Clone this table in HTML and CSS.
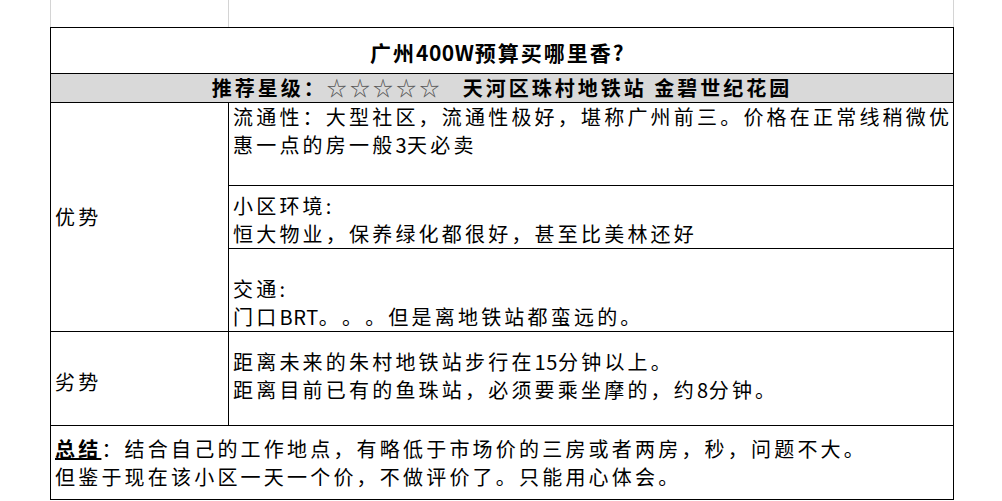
FILE: index.html
```html
<!DOCTYPE html>
<html lang="zh-CN">
<head>
<meta charset="utf-8">
<title>广州400W预算买哪里香?</title>
<link rel="stylesheet" href="styles.css">
</head>
<body>
<div class="sheet">
  <div class="strip">
    <div class="gcell"></div>
    <div class="gcell last"></div>
  </div>
  <div class="table">
    <div class="cell title span2"><span>广州<span class="lat">400W</span>预算买哪里香<span class="lat">?</span></span></div>
    <div class="cell sub span2"><span>推荐星级：</span><span class="stars">☆☆☆☆☆</span><span class="gap"></span><span>天河区珠村地铁站 金碧世纪花园</span></div>

    <div class="cell label adv">优势</div>
    <div class="cell text top"><span>流通性：大型社区，流通性极好，堪称广州前三。价格在正常线稍微优<br>惠一点的房一般<span class="lat">3</span>天必卖</span></div>
    <div class="cell text bottom"><span>小区环境:<br>恒大物业，保养绿化都很好，甚至比美林还好</span></div>
    <div class="cell text bottom"><span>交通:<br>门口<span class="lat">BRT</span>。。。但是离地铁站都蛮远的。</span></div>

    <div class="cell label dis">劣势</div>
    <div class="cell text mid dis-text"><span>距离未来的朱村地铁站步行在<span class="lat">15</span>分钟以上。<br>距离目前已有的鱼珠站，必须要乘坐摩的，约<span class="lat">8</span>分钟。</span></div>

    <div class="cell text mid span2 summary"><span><b class="key">总结</b>：结合自己的工作地点，有略低于市场价的三房或者两房，秒，问题不大。<br>但鉴于现在该小区一天一个价，不做评价了。只能用心体会。</span></div>
  </div>
</div>
</body>
</html>
```

FILE: styles.css
```css
html, body {
  margin: 0;
  padding: 0;
  background: #ffffff;
}

body {
  font-family: "Noto Sans CJK SC", "Noto Sans", sans-serif;
  color: #000000;
  width: 1002px;
  height: 501px;
  overflow: hidden;
  text-spacing-trim: space-all;
}

.sheet {
  padding-left: 50px;
}

.strip {
  display: grid;
  grid-template-columns: 178px 726px;
  height: 27px;
}

.gcell {
  border-left: 1px solid #d4d4d4;
}

.gcell.last {
  border-right: 1px solid #d4d4d4;
}

.table {
  display: grid;
  width: 904px;
  box-sizing: border-box;
  grid-template-columns: 178px 725px;
  grid-template-rows: 46px 29px 83px 63px 83px 94px 74px;
  border-top: 1px solid #000;
  border-left: 1px solid #000;
}

.cell {
  border-right: 1px solid #000;
  border-bottom: 1px solid #000;
  font-size: 20px;
  line-height: 28px;
  letter-spacing: 3.2px;
  white-space: nowrap;
  display: flex;
  flex-direction: column;
  padding-left: 4px;
}

.lat {
  letter-spacing: 0.6px;
}

.span2 {
  grid-column: 1 / span 2;
}

.title {
  font-weight: bold;
  font-size: 21px;
  align-items: center;
  justify-content: center;
  padding-left: 0;
  padding-top: 3px;
  padding-right: 10px;
  letter-spacing: 2px;
}

.sub {
  background: #d9d9d9;
  font-weight: bold;
  flex-direction: row;
  align-items: center;
  justify-content: center;
  padding-left: 0;
  letter-spacing: 3px;
}

.stars {
  font-weight: normal;
  color: #555555;
  letter-spacing: 3.2px;
}

.gap {
  display: inline-block;
  width: 20px;
}

.label {
  justify-content: center;
}

.adv {
  grid-row: 3 / span 3;
}

.dis {
  padding-top: 6px;
}

.top {
  justify-content: flex-start;
  padding-top: 0;
}

.bottom {
  justify-content: flex-end;
}

.mid {
  justify-content: center;
}

.dis-text {
  padding-bottom: 6px;
}

.key {
  text-decoration: underline;
}
```
